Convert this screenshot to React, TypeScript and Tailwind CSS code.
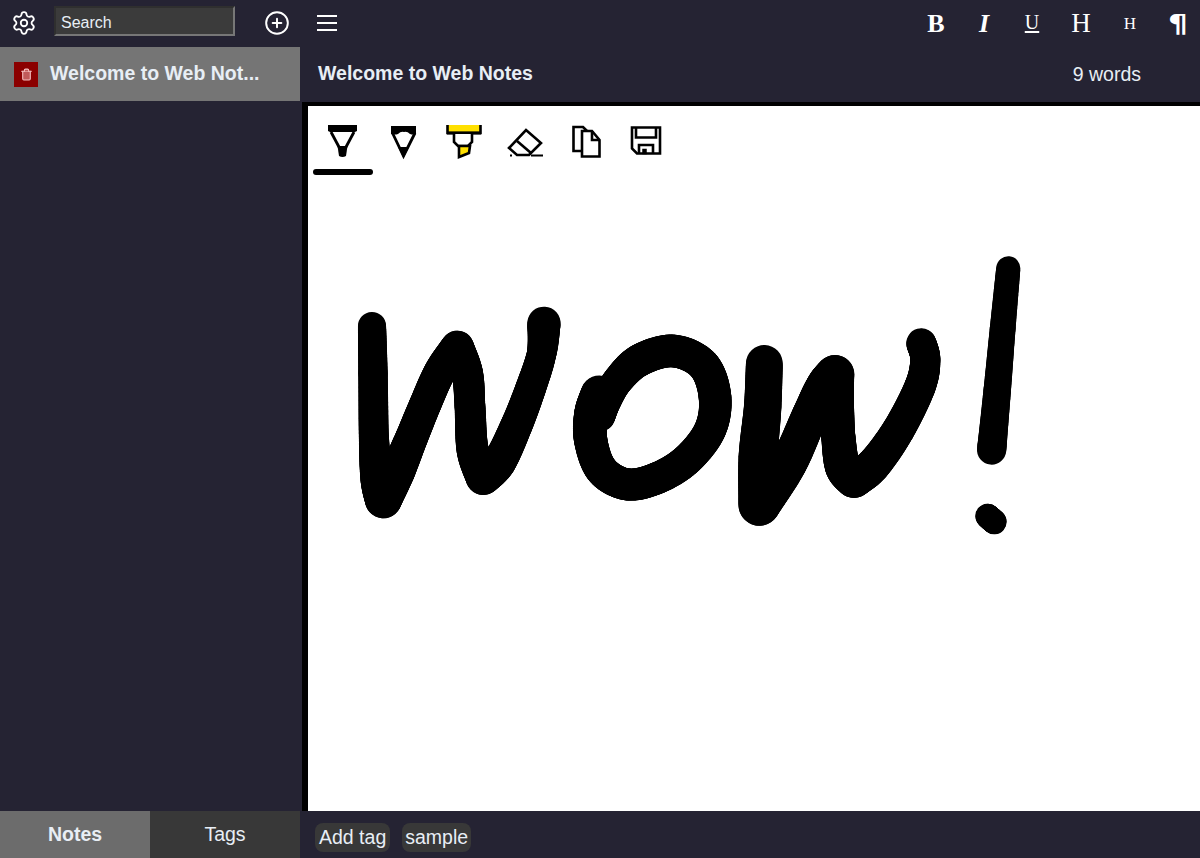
import { Settings, CirclePlus, Trash2 } from "lucide-react";

const font = "[font-family:'Liberation_Sans',Arial,sans-serif]";
const serif = "[font-family:'Liberation_Serif','Times_New_Roman',serif]";

const PenIcon = () => (
  <svg width="32" height="36" viewBox="0 0 32 36" fill="none" stroke="#000" strokeWidth="2.8">
    <path d="M1 2h29v6l-2 1H3L1 8z" fill="#000" stroke="none" />
    <path d="M4 9l8 15M27 9l-8 15" />
    <path d="M10.5 23h10l-1.5 10q-3.5 2-7 0z" fill="#000" stroke="none" />
  </svg>
);

const PencilIcon = () => (
  <svg width="28" height="34" viewBox="0 0 28 34" fill="none">
    <path d="M1 0h25v8q-3 1-6 0-3-3-6-2-3-1-6 2-3 1-7 0z" fill="#000" />
    <path d="M2.5 7l11 23L25 7" stroke="#000" strokeWidth="2.8" />
    <path d="M8 21h11l-5.5 11z" fill="#000" />
  </svg>
);

const MarkerIcon = () => (
  <svg width="36" height="36" viewBox="0 0 36 36" fill="none" stroke="#000" strokeWidth="2.6">
    <path d="M1.5 0v8h33V0" fill="#ffe000" />
    <path d="M1 8h34" strokeWidth="3" />
    <path d="M8 9v8l4 4h10l4-4V9" fill="#fff" />
    <path d="M13 21v11l10-4 1-7z" fill="#ffe000" />
  </svg>
);

const EraserIcon = () => (
  <svg width="40" height="30" viewBox="0 0 40 30" fill="none" stroke="#000" strokeWidth="2.6">
    <path d="M21 2l15 13-12 12H12l-8-7z" />
    <path d="M12 13l14 12" />
    <path d="M5 27.5h2M26 27.5h12" strokeWidth="2" />
  </svg>
);

const PagesIcon = () => (
  <svg width="36" height="36" viewBox="0 0 36 36" fill="none" stroke="#000" strokeWidth="2.6">
    <path d="M13.5 27H5.5V3H15l4.5 4.5" />
    <path d="M14 7h10l7.5 9v16.5H14z" fill="#fff" />
    <path d="M24 7v9h7.5" />
  </svg>
);

const SaveIcon = () => (
  <svg width="32" height="30" viewBox="0 0 32 30" fill="none" stroke="#000" strokeWidth="2.6">
    <path d="M2 1.5h28v26H7L2 22.5z" />
    <path d="M6 1.5v10h20v-10" />
    <path d="M9 27.5V19h14v8.5" />
    <path d="M13 27.5v-4h3v4z" fill="#000" strokeWidth="1.5" />
  </svg>
);

// pen stroke with changing width: points are x, y, width
const Brush = ({ points: p }: { points: number[][] }) => {
  const dots: number[][] = [];
  for (let i = 0; i < p.length - 1; i++) {
    const a = p[Math.max(i - 1, 0)];
    const b = p[i];
    const c = p[i + 1];
    const d = p[Math.min(i + 2, p.length - 1)];
    for (let s = 0; s <= 16; s++) {
      const t = s / 16;
      const at = (k: number) =>
        0.5 * (2 * b[k] + (c[k] - a[k]) * t + (2 * a[k] - 5 * b[k] + 4 * c[k] - d[k]) * t * t + (3 * b[k] - a[k] - 3 * c[k] + d[k]) * t * t * t);
      dots.push([at(0), at(1), b[2] + (c[2] - b[2]) * t]);
    }
  }
  return (
    <>
      {dots.slice(1).map((q, i) => (
        <line key={i} x1={dots[i][0]} y1={dots[i][1]} x2={q[0]} y2={q[1]} strokeWidth={q[2]} />
      ))}
    </>
  );
};

const Drawing = () => (
  <svg className="absolute inset-0" width="892" height="705" viewBox="308 106 892 705" fill="none" stroke="#000" strokeLinecap="round">
    <g transform="translate(340 240) scale(0.3333)">
      <Brush points={[[96, 258, 84], [99, 400, 88], [102, 600, 90], [112, 720, 100], [130, 780, 110]]} />
      <Brush points={[[130, 780, 110], [172, 695, 106], [214, 595, 98], [255, 495, 96], [300, 395, 96], [352, 322, 100]]} />
      <Brush points={[[352, 322, 100], [382, 400, 94], [390, 500, 92], [398, 630, 96], [430, 712, 106]]} />
      <Brush points={[[430, 712, 106], [478, 665, 102], [530, 555, 96], [572, 445, 92], [605, 340, 88], [612, 250, 100]]} />
      <Brush points={[[778, 462, 112], [755, 520, 104], [752, 600, 100], [785, 690, 98], [860, 733, 96], [950, 715, 96], [1040, 660, 96], [1110, 570, 96], [1125, 470, 98], [1090, 375, 98], [1000, 333, 98], [900, 360, 98], [835, 420, 92], [800, 480, 90], [780, 530, 90]]} />
    </g>
    <g transform="translate(720 240) scale(0.3333)">
      <Brush points={[[133, 370, 110], [128, 500, 112], [115, 650, 118], [118, 795, 125]]} />
      <Brush points={[[118, 795, 125], [205, 670, 112], [270, 525, 108], [310, 440, 106], [345, 403, 116]]} />
      <Brush points={[[345, 403, 116], [350, 500, 104], [355, 590, 102], [368, 680, 106], [402, 718, 112]]} />
      <Brush points={[[402, 718, 112], [460, 675, 104], [535, 570, 98], [600, 440, 94], [616, 360, 90], [604, 310, 90]]} />
      <Brush points={[[865, 85, 72], [848, 267, 77], [832, 449, 82], [815, 630, 88]]} />
      <Brush points={[[803, 828, 74], [823, 846, 74]]} />
    </g>
  </svg>
);

export default function App() {
  return (
    <div className={`flex h-[858px] w-[1200px] overflow-hidden bg-black text-[#e8eef5] ${font}`}>
      <aside className="flex w-[302px] shrink-0 flex-col bg-[#252333]">
        <div className="flex h-[47px]">
          <Settings className="ml-[11px] mt-[10px] text-white" size={26} strokeWidth={1.7} />
          <div className="ml-[17px] mt-[6px] flex h-[30px] w-[181px] items-center border-2 border-[#2f2f2f] border-r-[#777] border-b-[#777] bg-[#3b3b3b] pl-[5px] pt-[3px] text-base">
            Search
          </div>
          <CirclePlus className="ml-[29px] mt-[10px] text-white" size={26} strokeWidth={1.8} />
        </div>
        <div className="flex h-[54px] w-[300px] items-center bg-[#757575]">
          <div className="ml-[14px] flex h-[25px] w-6 items-center justify-center bg-[#8b0000]">
            <Trash2 className="fill-[#c05a5a] text-[#f5c0c0]" size={13} />
          </div>
          <span className="ml-3 text-[19.5px] font-bold">Welcome to Web Not...</span>
        </div>
        <div className="flex-1" />
        <div className="flex h-[47px] text-[19.5px]">
          <div className="flex w-[150px] items-center justify-center bg-[#6c6c6c] font-bold">Notes</div>
          <div className="flex w-[150px] items-center justify-center bg-[#383838]">Tags</div>
        </div>
      </aside>

      <main className="flex min-w-0 flex-1 flex-col">
        <header className="flex h-[102px] flex-col bg-[#252333]">
          <div className="flex h-[47px] items-center">
            <svg className="ml-[14px] mb-[1px]" width="22" height="16" viewBox="0 0 22 16" stroke="#fff" strokeWidth="2">
              <path d="M1 1h20M1 8h20M1 15h20" />
            </svg>
            <div className={`ml-auto flex items-center text-white ${serif}`}>
              <span className="flex w-[60px] justify-center text-[26px] font-bold">B</span>
              <span className="flex w-[36px] justify-center text-[26px] font-bold italic">I</span>
              <span className="mb-[4px] flex w-[60px] justify-center text-[20px] underline underline-offset-[2px]">U</span>
              <span className="flex w-[38px] justify-center text-[27px]">H</span>
              <span className="flex w-[60px] justify-center text-[17px]">H</span>
              <span className="flex w-[36px] origin-center scale-x-125 justify-center text-[25px] font-bold [font-family:'DejaVu_Sans',sans-serif]">¶</span>
              <span className="w-[4px]" />
            </div>
          </div>
          <div className="flex flex-1 items-center">
            <span className="ml-[16px] mb-[2px] text-[19.5px] font-bold">Welcome to Web Notes</span>
            <span className="ml-auto mr-[59px] text-[19.5px]">9 words</span>
          </div>
        </header>
        <div className="flex min-h-0 flex-1 flex-col border-t-4 border-l-[6px] border-black">
          <div className="relative flex-1 bg-white">
            <Drawing />
            <div className="relative flex h-[69px] pl-[5px]">
              <div className="flex w-[60.6px] flex-col items-center pt-[17px]">
                <PenIcon />
                <div className="mt-auto h-[6px] w-[60px] rounded-full bg-black" />
              </div>
              <div className="flex w-[60.6px] justify-center pt-[20px]"><div className="h-fit"><PencilIcon /></div></div>
              <div className="flex w-[60.6px] justify-center pt-[19px]"><div className="h-fit"><MarkerIcon /></div></div>
              <div className="flex w-[60.6px] justify-center pt-[22px]"><div className="h-fit"><EraserIcon /></div></div>
              <div className="flex w-[60.6px] justify-center pt-[18px]"><div className="h-fit"><PagesIcon /></div></div>
              <div className="flex w-[60.6px] justify-center pt-[20px]"><div className="h-fit"><SaveIcon /></div></div>
            </div>
          </div>
        </div>
        <footer className="flex h-[47px] items-center gap-[12px] bg-[#252333] pl-[13px] pt-[6px] text-[19.5px]">
          <span className="flex h-[29px] items-center rounded-lg bg-[#383838] px-[4px]">Add tag</span>
          <span className="flex h-[29px] items-center rounded-lg bg-[#383838] px-[3px]">sample</span>
        </footer>
      </main>
    </div>
  );
}
